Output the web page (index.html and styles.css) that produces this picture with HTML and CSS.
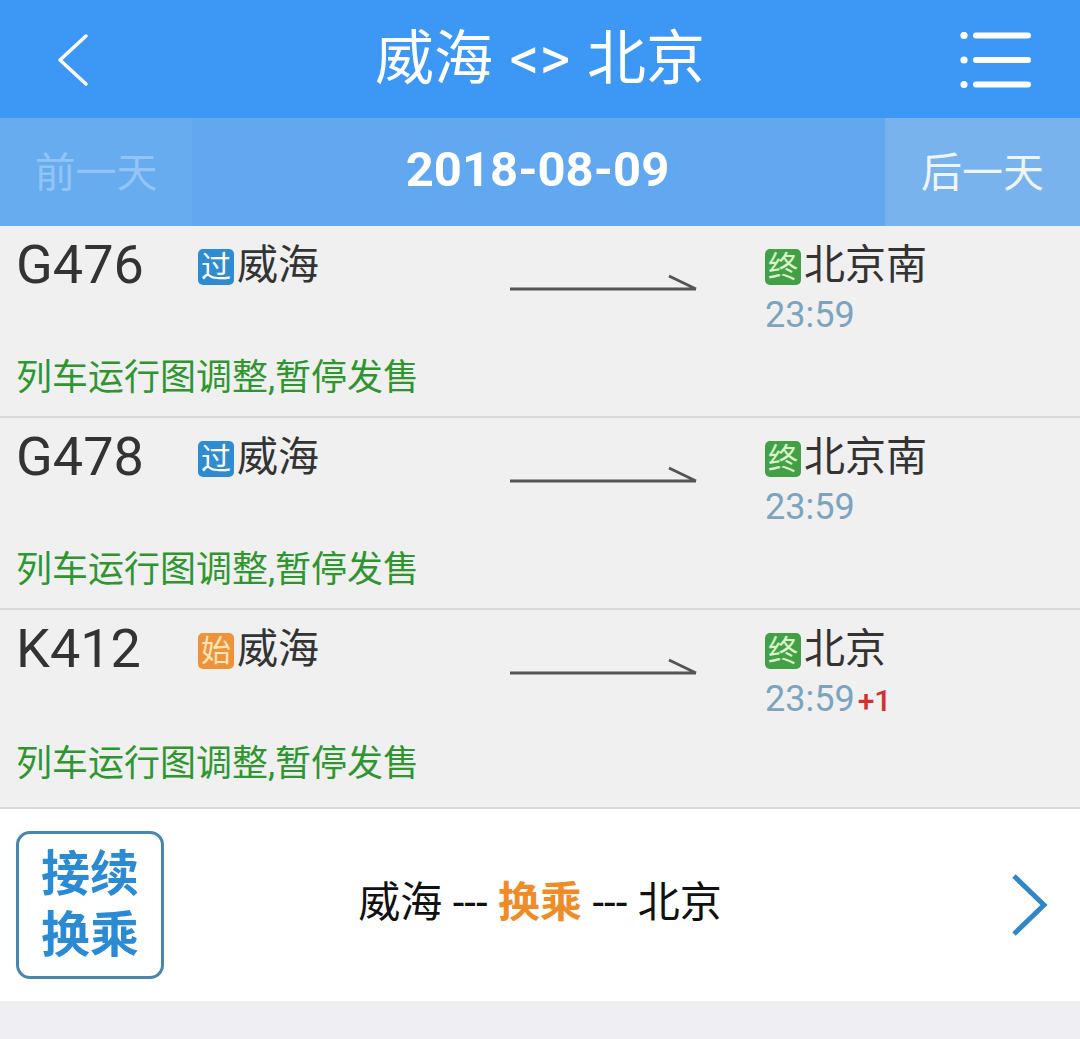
FILE: index.html
```html
<!DOCTYPE html>
<html lang="zh-CN">
<head>
<meta charset="utf-8">
<title>威海 &lt;&gt; 北京</title>
<link rel="stylesheet" href="styles.css">
</head>
<body>
<div class="app">
  <header class="topbar">
    <div class="topbar-side">
      <svg class="back" width="34" height="54" viewBox="0 0 34 54"><path d="M30 3 L4 27 L30 51" fill="none" stroke="#ffffff" stroke-width="3.5" stroke-linecap="round" stroke-linejoin="round"/></svg>
    </div>
    <h1 class="title">威海 &lt;&gt; 北京</h1>
    <div class="topbar-side right">
      <svg class="menu" width="72" height="56" viewBox="0 0 72 56">
        <circle cx="4" cy="3.5" r="3.6" fill="#ffffff"/>
        <circle cx="4" cy="28" r="3.6" fill="#ffffff"/>
        <circle cx="4" cy="52.5" r="3.6" fill="#ffffff"/>
        <rect x="13" y="0.5" width="58" height="6" rx="3" fill="#ffffff"/>
        <rect x="13" y="25" width="58" height="6" rx="3" fill="#ffffff"/>
        <rect x="13" y="49.5" width="58" height="6" rx="3" fill="#ffffff"/>
      </svg>
    </div>
  </header>

  <nav class="datebar">
    <div class="day prev">前一天</div>
    <div class="date">2018-08-09</div>
    <div class="day next">后一天</div>
  </nav>

  <ul class="trains">
    <li class="train">
      <div class="main">
        <div class="num">G476</div>
        <div class="from"><span class="tag pass">过</span><span class="station">威海</span></div>
        <svg class="arrow" width="188" height="22" viewBox="0 0 188 22"><path d="M0 17 H186 M159 4 L186 17" fill="none" stroke="#555555" stroke-width="3"/></svg>
        <div class="to">
          <div class="to-station"><span class="tag end">终</span><span class="station">北京南</span></div>
          <div class="time">23:59</div>
        </div>
      </div>
      <div class="status">列车运行图调整,暂停发售</div>
    </li>
    <li class="train">
      <div class="main">
        <div class="num">G478</div>
        <div class="from"><span class="tag pass">过</span><span class="station">威海</span></div>
        <svg class="arrow" width="188" height="22" viewBox="0 0 188 22"><path d="M0 17 H186 M159 4 L186 17" fill="none" stroke="#555555" stroke-width="3"/></svg>
        <div class="to">
          <div class="to-station"><span class="tag end">终</span><span class="station">北京南</span></div>
          <div class="time">23:59</div>
        </div>
      </div>
      <div class="status">列车运行图调整,暂停发售</div>
    </li>
    <li class="train">
      <div class="main">
        <div class="num">K412</div>
        <div class="from"><span class="tag start">始</span><span class="station">威海</span></div>
        <svg class="arrow" width="188" height="22" viewBox="0 0 188 22"><path d="M0 17 H186 M159 4 L186 17" fill="none" stroke="#555555" stroke-width="3"/></svg>
        <div class="to">
          <div class="to-station"><span class="tag end">终</span><span class="station">北京</span></div>
          <div class="time">23:59<span class="plus">+1</span></div>
        </div>
      </div>
      <div class="status">列车运行图调整,暂停发售</div>
    </li>
  </ul>

  <section class="transfer">
    <div class="transfer-left">
      <div class="transfer-btn"><span>接续</span><span>换乘</span></div>
    </div>
    <div class="transfer-route">威海 --- <b>换乘</b> --- 北京</div>
    <div class="transfer-right">
      <svg class="chev" width="40" height="64" viewBox="0 0 40 64"><path d="M4 3 L34 32 L4 61" fill="none" stroke="#2f86c8" stroke-width="5"/></svg>
    </div>
  </section>
</div>
</body>
</html>
```

FILE: styles.css
```css
* { box-sizing: border-box; }
html, body { margin: 0; padding: 0; }
body {
  font-family: Roboto, "Noto Sans CJK SC", sans-serif;
  background: #efeff3;
}
.app {
  width: 1080px;
  height: 1039px;
  background: #efeff3;
  overflow: hidden;
}

/* top bar */
.topbar {
  height: 118px;
  background: #3d97f5;
  display: flex;
  align-items: center;
}
.topbar-side {
  width: 220px;
  display: flex;
  align-items: center;
  padding-left: 56px;
}
.topbar-side.right {
  justify-content: flex-end;
  padding-left: 0;
  padding-right: 48px;
}
.back { display: block; margin-top: 2px; }
.menu { display: block; margin-top: 1px; }
.title {
  flex: 1;
  margin: 0;
  text-align: center;
  color: #ffffff;
  font-weight: 400;
  font-size: 59px;
  line-height: 62px;
  word-spacing: 2px;
}

/* date bar */
.datebar {
  height: 108px;
  background: #62a8f0;
  display: flex;
  align-items: stretch;
}
.day {
  width: 192px;
  display: flex;
  align-items: center;
  justify-content: center;
  font-size: 41px;
  padding-bottom: 6px;
}
.prev { background: #68acf0; color: #92c4f5; }
.next { width: 195px; background: #78b3ee; color: #eef5fd; }
.date {
  flex: 1;
  display: flex;
  align-items: center;
  justify-content: center;
  color: #ffffff;
  font-weight: 700;
  font-size: 49px;
  padding-bottom: 6px;
  padding-right: 2px;
}

/* train list */
.trains {
  list-style: none;
  margin: 0;
  padding: 0;
}
.train {
  background: #f0f0f0;
  padding: 9px 0 13px 16px;
  border-bottom: 2px solid #d9d9d9;
}
.train:last-child { padding-bottom: 18px; }
.main {
  display: flex;
  align-items: flex-start;
}
.num {
  width: 182px;
  font-size: 54px;
  line-height: 60px;
  color: #333333;
}
.from {
  width: 312px;
  height: 60px;
  display: flex;
  align-items: center;
}
.tag {
  width: 36px;
  height: 36px;
  border-radius: 5px;
  display: inline-flex;
  align-items: center;
  justify-content: center;
  font-size: 30px;
  line-height: 1;
  margin-top: 4px;
  margin-right: 3px;
}
.tag.pass { background: #2f8cd2; color: #ffffff; }
.tag.end { background: #43a047; color: #d8f5c8; }
.tag.start { background: #ee923c; color: #fde6b8; }
.station {
  font-size: 41px;
  color: #333333;
  line-height: 60px;
}
.arrow {
  display: block;
  margin-top: 37px;
  margin-right: 67px;
}
.to-station {
  height: 60px;
  display: flex;
  align-items: center;
}
.time {
  font-size: 36px;
  line-height: 40px;
  color: #7ba4bf;
}
.plus {
  color: #d32f2f;
  font-size: 30px;
  font-weight: 500;
  margin-left: 3px;
}
.status {
  margin-top: 18px;
  font-size: 36px;
  line-height: 50px;
  color: #2f962f;
}

/* transfer */
.transfer {
  height: 192px;
  background: #ffffff;
  display: grid;
  grid-template-columns: 1fr auto 1fr;
  align-items: center;
  padding: 0 16px;
}
.transfer-btn {
  width: 148px;
  height: 148px;
  border: 3px solid #4887ab;
  border-radius: 14px;
  display: flex;
  flex-direction: column;
  align-items: center;
  justify-content: center;
  color: #2a8ad4;
  font-weight: 700;
  font-size: 49px;
  line-height: 61px;
}
.transfer-route {
  font-size: 42px;
  color: #111111;
  white-space: pre;
  margin-top: -14px;
}
.transfer-route b {
  color: #f08c28;
  font-weight: 700;
}
.transfer-right {
  display: flex;
  justify-content: flex-end;
  padding-right: 14px;
}
.chev { display: block; }
```
